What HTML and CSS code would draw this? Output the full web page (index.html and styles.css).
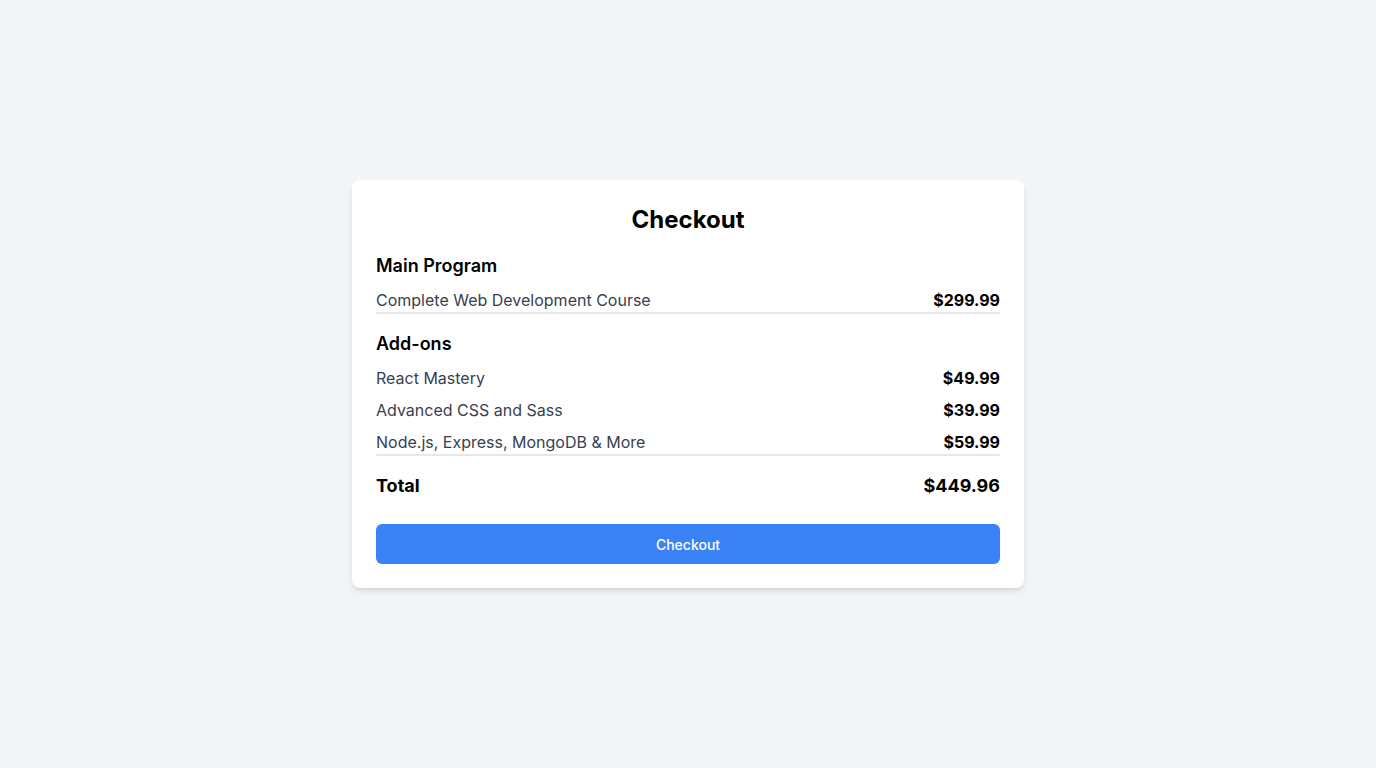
FILE: index.html
```html
<!DOCTYPE html>
<html lang="en">
<head>
<meta charset="utf-8">
<title>Checkout</title>
<link rel="stylesheet" href="styles.css">
</head>
<body>
<main class="page">
  <section class="card">
    <h1 class="title">Checkout</h1>
    <div class="section">
      <h2 class="heading">Main Program</h2>
      <ul class="items">
        <li class="item"><span class="name">Complete Web Development Course</span><span class="price">$299.99</span></li>
      </ul>
    </div>
    <div class="section">
      <h2 class="heading">Add-ons</h2>
      <ul class="items">
        <li class="item"><span class="name">React Mastery</span><span class="price">$49.99</span></li>
        <li class="item"><span class="name">Advanced CSS and Sass</span><span class="price">$39.99</span></li>
        <li class="item"><span class="name">Node.js, Express, MongoDB &amp; More</span><span class="price">$59.99</span></li>
      </ul>
    </div>
    <div class="total">
      <span class="total-label">Total</span>
      <span class="total-value">$449.96</span>
    </div>
    <button class="btn" type="button">Checkout</button>
  </section>
</main>
</body>
</html>
```
FILE: styles.css
```css
* { box-sizing: border-box; }
html, body { margin: 0; padding: 0; }
body {
  background: #f3f4f6;
  font-family: Inter, "Noto Sans", sans-serif;
  color: #000;
}
.page {
  min-height: 768px;
  display: flex;
  align-items: center;
  justify-content: center;
}
.card {
  width: 672px;
  background: #fff;
  border-radius: 8px;
  padding: 24px;
  box-shadow: 0 4px 6px -1px rgba(0,0,0,0.1), 0 2px 4px -2px rgba(0,0,0,0.1);
}
.title {
  margin: 0 0 16px;
  font-size: 24px;
  line-height: 32px;
  font-weight: 700;
  text-align: center;
}
.section { margin-bottom: 16px; }
.heading {
  margin: 0 0 8px;
  font-size: 18px;
  line-height: 28px;
  font-weight: 600;
}
.items {
  list-style: none;
  margin: 0;
  padding: 0;
  display: flex;
  flex-direction: column;
  gap: 8px;
  border-bottom: 2px solid #e5e7eb;
}
.item {
  display: flex;
  justify-content: space-between;
  font-size: 16px;
  line-height: 24px;
}
.name { color: #374151; }
.price { font-weight: 700; }
.total {
  display: flex;
  justify-content: space-between;
  font-size: 18px;
  line-height: 28px;
  font-weight: 700;
  margin-bottom: 24px;
}
.btn {
  display: block;
  width: 100%;
  height: 40px;
  border: 0;
  border-radius: 6px;
  background: #3b82f6;
  color: #fff;
  font-family: Inter, "Noto Sans", sans-serif;
  font-size: 14px;
  font-weight: 500;
  cursor: pointer;
}
```
